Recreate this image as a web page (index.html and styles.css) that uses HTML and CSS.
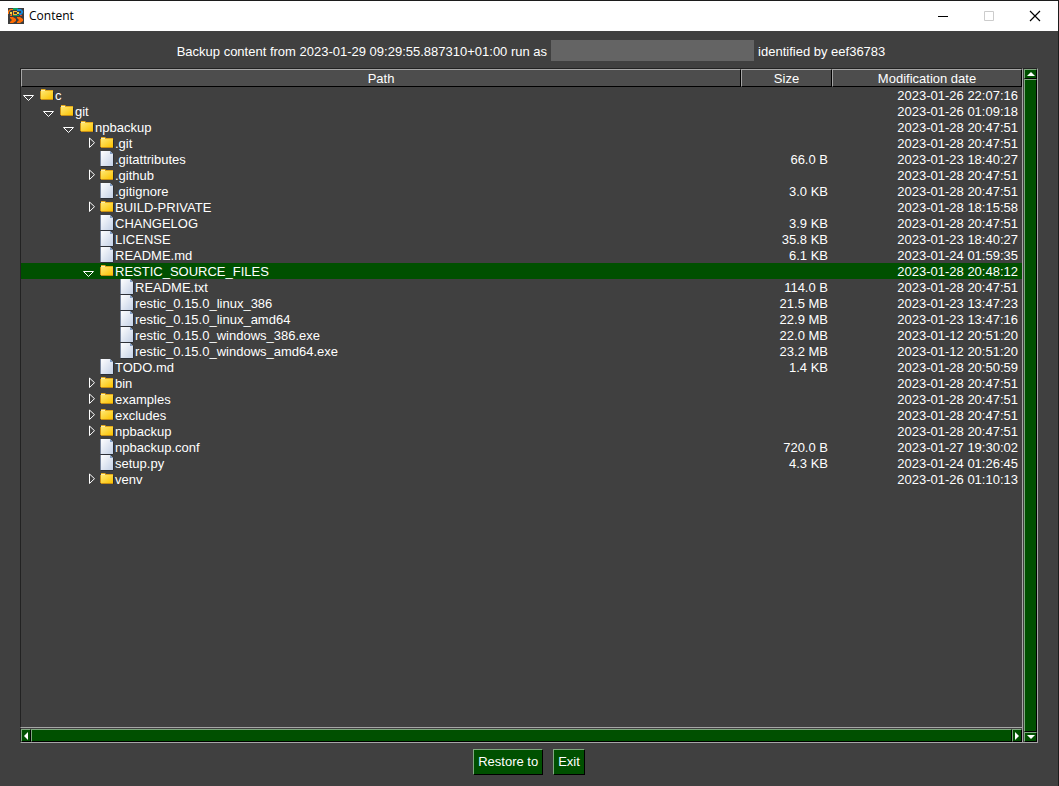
FILE: index.html
```html
<!DOCTYPE html>
<html lang="en">
<head>
<meta charset="utf-8">
<title>Content</title>
<link rel="stylesheet" href="styles.css">
</head>
<body>
<svg class="sprites" aria-hidden="true">
  <defs>
    <linearGradient id="gold" x1="0" y1="0" x2="1" y2="1"><stop offset="0" stop-color="#ffe873"/><stop offset="1" stop-color="#fbc200"/></linearGradient>
    <linearGradient id="paper" x1="0" y1="0" x2="1" y2="1"><stop offset="0" stop-color="#ffffff"/><stop offset="1" stop-color="#c3d0e6"/></linearGradient>
  </defs>
  <symbol id="folder" viewBox="0 0 14 16">
    <path d="M1 13h13V5h-1v8z" fill="#2c2c2c"/>
    <path d="M1 3V2h4l1 1h7v2H1z" fill="#e3a81c"/>
    <path d="M1 3h4v1H1z" fill="#fff0a8"/>
    <path d="M1 4h12v8H1z" fill="url(#gold)"/>
    <path d="M0 4h1v8H0zM1 12h12v1H1z" fill="#c98f14"/>
  </symbol>
  <symbol id="file" viewBox="0 0 14 16">
    <path d="M1 0h9l3 3v12H1z" fill="url(#paper)"/>
    <path d="M10 0v3h3z" fill="#7f9cc6"/>
    <path d="M0 0h1v15H0z" fill="#76839a"/>
    <path d="M1 15h12v1H1zM13 3h1v12h-1z" fill="#2c3038"/>
  </symbol>
  <symbol id="open" viewBox="0 0 14 16"><path d="M.5 8.500h10L5.500 13.500z" fill="none" stroke="#fff"/></symbol>
  <symbol id="closed" viewBox="0 0 14 16"><path d="M6.500 3v9.500L11.500 7.700z" fill="none" stroke="#fff"/></symbol>
</svg>
<div class="window">
  <header class="titlebar">
    <svg class="logo" viewBox="0 0 16 16" aria-hidden="true">
      <path d="M0 0h16v16H0z" fill="#3d3d3d"/>
      <path d="M0 6V3l2-2h4v1H3L1 4v2zM3 6h1v2H2z" fill="#ff7a10"/>
      <path d="M5 0h5v2H5zM5 7h6v1H5z" fill="#12a05a"/>
      <path d="M9 1h4l2 2v2l-2 2h-2V5h2V3H9z" fill="#1787d8"/>
      <path d="M5 3h4v1H6v2h3v1H5z" fill="#ffb52b"/>
      <path d="M2 4h2v2H2zM9 4h2v2H9z" fill="#f2d648"/>
      <path d="M12 7h2v1h-2z" fill="#e04422"/>
      <path d="M2 9h3l3 2v2l-3 2H2v-1l2-2-2-2zM9 9h3l3 2v2l-3 2H9v-1l2-2-2-2z" fill="#ff6a00"/>
    </svg>
    <h1 class="title">Content</h1>
    <div class="controls">
      <button class="control" aria-label="Minimize"><svg viewBox="0 0 12 12"><path d="M1 6.500h10" stroke="#000"/></svg></button>
      <button class="control" aria-label="Maximize" disabled><svg viewBox="0 0 12 12"><path d="M1.500 1.500h9v9h-9z" fill="none" stroke="#ccc"/></svg></button>
      <button class="control" aria-label="Close"><svg viewBox="0 0 12 12"><path d="M1 1l10 10M11 1L1 11" stroke="#000" stroke-width="1.200"/></svg></button>
    </div>
  </header>
  <main class="content">
    <p class="summary"><span class="phrase">Backup content from 2023-01-29 09:29:55.887310+01:00 run as</span><span class="redacted"></span><span class="phrase">identified by eef36783</span></p>
    <div class="browser">
      <div class="viewport">
        <table class="tree">
          <colgroup><col><col class="col-size"><col class="col-date"></colgroup>
          <thead><tr><th>Path</th><th>Size</th><th>Modification date</th></tr></thead>
          <tbody>
            <tr><td><div class="node d0"><button class="toggle" aria-label="Collapse c"><svg><use href="#open"/></svg></button><svg class="icon"><use href="#folder"/></svg>c</div></td><td></td><td>2023-01-26 22:07:16</td></tr>
            <tr><td><div class="node d1"><button class="toggle" aria-label="Collapse git"><svg><use href="#open"/></svg></button><svg class="icon"><use href="#folder"/></svg>git</div></td><td></td><td>2023-01-26 01:09:18</td></tr>
            <tr><td><div class="node d2"><button class="toggle" aria-label="Collapse npbackup"><svg><use href="#open"/></svg></button><svg class="icon"><use href="#folder"/></svg>npbackup</div></td><td></td><td>2023-01-28 20:47:51</td></tr>
            <tr><td><div class="node d3"><button class="toggle" aria-label="Expand .git"><svg><use href="#closed"/></svg></button><svg class="icon"><use href="#folder"/></svg>.git</div></td><td></td><td>2023-01-28 20:47:51</td></tr>
            <tr><td><div class="node d3 leaf"><svg class="icon"><use href="#file"/></svg>.gitattributes</div></td><td>66.0 B</td><td>2023-01-23 18:40:27</td></tr>
            <tr><td><div class="node d3"><button class="toggle" aria-label="Expand .github"><svg><use href="#closed"/></svg></button><svg class="icon"><use href="#folder"/></svg>.github</div></td><td></td><td>2023-01-28 20:47:51</td></tr>
            <tr><td><div class="node d3 leaf"><svg class="icon"><use href="#file"/></svg>.gitignore</div></td><td>3.0 KB</td><td>2023-01-28 20:47:51</td></tr>
            <tr><td><div class="node d3"><button class="toggle" aria-label="Expand BUILD-PRIVATE"><svg><use href="#closed"/></svg></button><svg class="icon"><use href="#folder"/></svg>BUILD-PRIVATE</div></td><td></td><td>2023-01-28 18:15:58</td></tr>
            <tr><td><div class="node d3 leaf"><svg class="icon"><use href="#file"/></svg>CHANGELOG</div></td><td>3.9 KB</td><td>2023-01-28 20:47:51</td></tr>
            <tr><td><div class="node d3 leaf"><svg class="icon"><use href="#file"/></svg>LICENSE</div></td><td>35.8 KB</td><td>2023-01-23 18:40:27</td></tr>
            <tr><td><div class="node d3 leaf"><svg class="icon"><use href="#file"/></svg>README.md</div></td><td>6.1 KB</td><td>2023-01-24 01:59:35</td></tr>
            <tr class="selected"><td><div class="node d3"><button class="toggle" aria-label="Collapse RESTIC_SOURCE_FILES"><svg><use href="#open"/></svg></button><svg class="icon"><use href="#folder"/></svg>RESTIC_SOURCE_FILES</div></td><td></td><td>2023-01-28 20:48:12</td></tr>
            <tr><td><div class="node d4 leaf"><svg class="icon"><use href="#file"/></svg>README.txt</div></td><td>114.0 B</td><td>2023-01-28 20:47:51</td></tr>
            <tr><td><div class="node d4 leaf"><svg class="icon"><use href="#file"/></svg>restic_0.15.0_linux_386</div></td><td>21.5 MB</td><td>2023-01-23 13:47:23</td></tr>
            <tr><td><div class="node d4 leaf"><svg class="icon"><use href="#file"/></svg>restic_0.15.0_linux_amd64</div></td><td>22.9 MB</td><td>2023-01-23 13:47:16</td></tr>
            <tr><td><div class="node d4 leaf"><svg class="icon"><use href="#file"/></svg>restic_0.15.0_windows_386.exe</div></td><td>22.0 MB</td><td>2023-01-12 20:51:20</td></tr>
            <tr><td><div class="node d4 leaf"><svg class="icon"><use href="#file"/></svg>restic_0.15.0_windows_amd64.exe</div></td><td>23.2 MB</td><td>2023-01-12 20:51:20</td></tr>
            <tr><td><div class="node d3 leaf"><svg class="icon"><use href="#file"/></svg>TODO.md</div></td><td>1.4 KB</td><td>2023-01-28 20:50:59</td></tr>
            <tr><td><div class="node d3"><button class="toggle" aria-label="Expand bin"><svg><use href="#closed"/></svg></button><svg class="icon"><use href="#folder"/></svg>bin</div></td><td></td><td>2023-01-28 20:47:51</td></tr>
            <tr><td><div class="node d3"><button class="toggle" aria-label="Expand examples"><svg><use href="#closed"/></svg></button><svg class="icon"><use href="#folder"/></svg>examples</div></td><td></td><td>2023-01-28 20:47:51</td></tr>
            <tr><td><div class="node d3"><button class="toggle" aria-label="Expand excludes"><svg><use href="#closed"/></svg></button><svg class="icon"><use href="#folder"/></svg>excludes</div></td><td></td><td>2023-01-28 20:47:51</td></tr>
            <tr><td><div class="node d3"><button class="toggle" aria-label="Expand npbackup"><svg><use href="#closed"/></svg></button><svg class="icon"><use href="#folder"/></svg>npbackup</div></td><td></td><td>2023-01-28 20:47:51</td></tr>
            <tr><td><div class="node d3 leaf"><svg class="icon"><use href="#file"/></svg>npbackup.conf</div></td><td>720.0 B</td><td>2023-01-27 19:30:02</td></tr>
            <tr><td><div class="node d3 leaf"><svg class="icon"><use href="#file"/></svg>setup.py</div></td><td>4.3 KB</td><td>2023-01-24 01:26:45</td></tr>
            <tr><td><div class="node d3"><button class="toggle" aria-label="Expand venv"><svg><use href="#closed"/></svg></button><svg class="icon"><use href="#folder"/></svg>venv</div></td><td></td><td>2023-01-26 01:10:13</td></tr>
          </tbody>
        </table>
      </div>
      <div class="scroll vertical">
        <button class="arrow" aria-label="Scroll up"><svg viewBox="0 0 8 4"><path d="M4 0l4 4H0z" fill="#fff"/></svg></button>
        <div class="thumb"></div>
        <button class="arrow" aria-label="Scroll down"><svg viewBox="0 0 8 4"><path d="M0 0h8L4 4z" fill="#fff"/></svg></button>
      </div>
      <div class="scroll horizontal">
        <button class="arrow" aria-label="Scroll left"><svg viewBox="0 0 4 8"><path d="M4 0v8L0 4z" fill="#fff"/></svg></button>
        <div class="thumb"></div>
        <button class="arrow" aria-label="Scroll right"><svg viewBox="0 0 4 8"><path d="M0 0l4 4-4 4z" fill="#fff"/></svg></button>
      </div>
    </div>
    <div class="actions"><button class="action">Restore to</button><button class="action">Exit</button></div>
  </main>
</div>
</body>
</html>
```
FILE: styles.css
```css
* { box-sizing: border-box; }
body {
  margin: 0;
  background: #404040;
  color: #fff;
  font: 13px/16px "Liberation Sans", Arial, sans-serif;
}
button { margin: 0; padding: 0; border: 0; background: none; color: inherit; font: inherit; }
svg { display: block; }
.sprites { position: absolute; width: 0; height: 0; }

.window {
  display: flex;
  flex-direction: column;
  min-height: 100vh;
  border-top: 1px solid #1c1c1c;
  border-right: 1px solid #1c1c1c;
}
.titlebar {
  display: flex;
  align-items: center;
  height: 30px;
  padding-left: 8px;
  background: #fff;
  color: #000;
}
.logo { width: 16px; height: 16px; }
.title { flex: 1; margin: 0 0 0 5px; font: 12px/16px "Open Sans", "Noto Sans", sans-serif; }
.controls { display: flex; }
.control { display: grid; place-items: center; width: 46px; height: 28px; }
.control svg { width: 12px; height: 12px; }

.content { flex: 1; display: flex; flex-direction: column; padding: 9px 20px 11px; }
.summary { display: flex; justify-content: center; align-items: center; gap: 4px; height: 21px; margin: 0 0 7px; padding-left: 4px; }
.phrase { padding-top: 3px; }
.redacted { width: 203px; height: 21px; background: #646464; }

.browser {
  flex: 1;
  display: grid;
  grid-template-columns: 1fr 16px;
  grid-template-rows: 1fr 16px;
}
.viewport { border-top: 1px solid #222; border-left: 1px solid #222; }
.tree { width: 100%; border-collapse: separate; border-spacing: 0; table-layout: fixed; line-height: 15px; }
.col-size { width: 91px; }
.col-date { width: 190px; }
.tree th {
  height: 18px;
  padding: 1px 0 0;
  border: 1px solid;
  border-color: #a6a6a6 #000 #000 #a6a6a6;
  background: #4d4d4d;
  font-weight: normal;
}
.tree td { height: 16px; padding: 1px 4px 0 0; text-align: right; white-space: nowrap; }
.selected { background: #005000; }
.node { display: flex; align-items: center; }
.d0 { padding-left: 2px; }
.d1 { padding-left: 22px; }
.d2 { padding-left: 42px; }
.d3 { padding-left: 62px; }
.d4 { padding-left: 82px; }
.toggle { width: 14px; height: 16px; margin: -1px 3px 0 0; }
.toggle svg { width: 14px; height: 16px; }
.icon { width: 14px; height: 16px; margin: -1px 1px 0 0; }
.leaf .icon { margin-left: 17px; }

.scroll { display: flex; border: 1px solid #a6a6a6; }
.vertical {
  grid-column: 2;
  grid-row: 1 / 3;
  flex-direction: column;
  padding-left: 1px;
  border-top-color: #222;
}
.horizontal { grid-column: 1; grid-row: 2; padding-top: 1px; border-left-color: #222; border-right: 0; }
.arrow, .thumb, .action {
  border: 1px solid;
  border-color: #80a880 #000 #000 #80a880;
  background: #005000;
}
.arrow { display: grid; place-items: center; }
.thumb { flex: 1; }
.vertical .arrow { height: 10px; }
.vertical svg { width: 8px; height: 4px; }
.horizontal .arrow { width: 10px; }
.horizontal svg { width: 4px; height: 8px; }

.actions { display: flex; justify-content: center; gap: 10px; margin-top: 6px; }
.action { height: 26px; padding: 0 4px; }
```
